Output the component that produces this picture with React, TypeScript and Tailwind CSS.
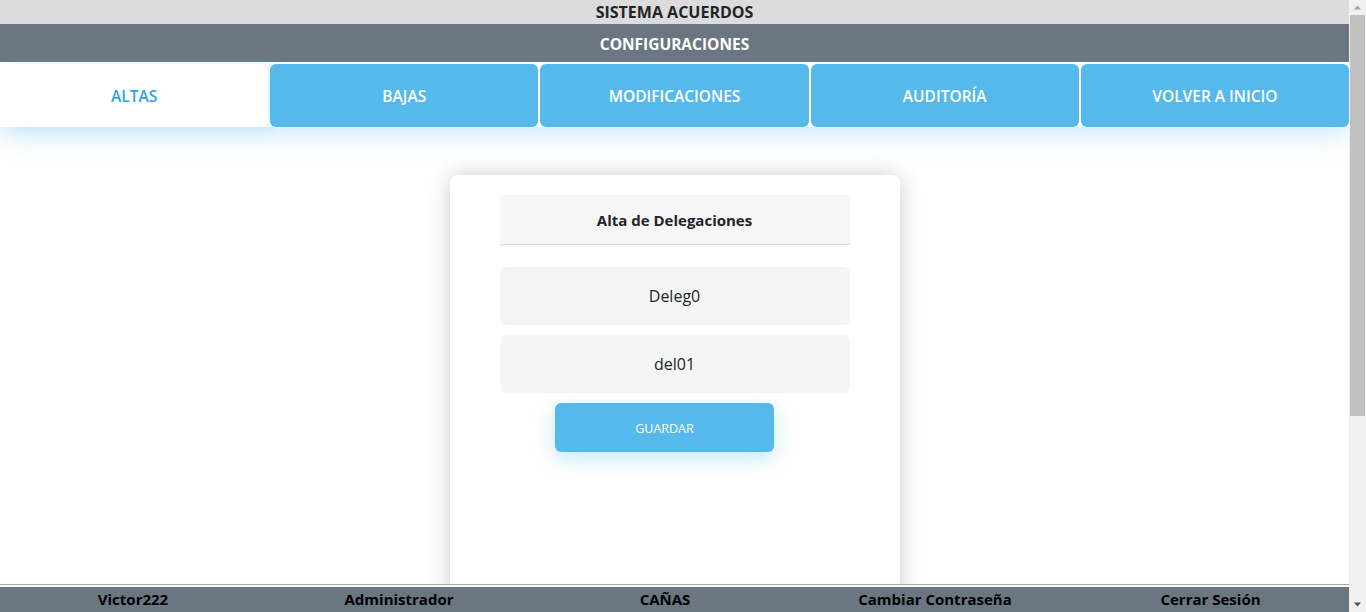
const tabs = ['ALTAS', 'BAJAS', 'MODIFICACIONES', 'AUDITORÍA', 'VOLVER A INICIO'];
const footer = ['Victor222', 'Administrador', 'CAÑAS', 'Cambiar Contraseña', 'Cerrar Sesión'];

function Scrollbar() {
  // page scrollbar, drawn because the headless browser hides its own
  return (
    <div className="fixed top-0 right-0 bottom-0 flex w-[17px] flex-col items-center bg-[#f1f1f1]">
      <svg width="17" height="15" viewBox="0 0 17 15" className="shrink-0">
        <path d="M5 9.5 L8.5 5.5 L12 9.5 Z" fill="#a3a3a3" />
      </svg>
      <div className="mx-auto h-[401px] w-[15px] bg-[#c1c1c1]" />
      <div className="flex-1" />
      <svg width="17" height="15" viewBox="0 0 17 15" className="shrink-0">
        <path d="M5 5.5 L8.5 9.5 L12 5.5 Z" fill="#505050" />
      </svg>
    </div>
  );
}

export default function App() {
  return (
    <div className="min-h-[882px] w-[calc(100%-17px)] bg-white text-[#212529] [font-family:'Open_Sans',sans-serif]">
      <header className="flex h-6 items-center justify-center bg-[#dcdcdc] text-base font-bold leading-none">
        SISTEMA ACUERDOS
      </header>
      <div className="flex h-[38px] items-center justify-center bg-[#6c7680] pt-[3px] text-[15.5px] font-bold text-white">
        CONFIGURACIONES
      </div>

      <nav className="flex gap-[2px] shadow-[0_10px_25px_rgba(86,185,235,0.25)]">
        {tabs.map((t, i) => (
          <button
            key={t}
            className={
              i === 0
                ? 'mt-[2px] h-[63px] flex-1 rounded-b-md bg-white pt-[3px] text-[15.5px] font-semibold text-[#2ba4ee] shadow-[8px_0_14px_rgba(86,185,235,0.2)]'
                : 'mt-[2px] h-[63px] flex-1 rounded-md bg-[#56b9eb] pt-[3px] text-[15.5px] font-semibold text-white'
            }
          >
            {t}
          </button>
        ))}
      </nav>

      <main className="flex justify-center pt-12 pb-5">
        <div className="flex h-[690px] w-[450px] flex-col items-center rounded-lg bg-white px-[50px] pt-5 shadow-[0_0_22px_rgba(0,0,0,0.2)]">
          <div className="flex h-[50px] w-full items-center justify-center rounded-t-sm border-b border-[#dcdcdc] bg-[#f6f6f6] pt-[2px] text-[15px] font-bold">
            Alta de Delegaciones
          </div>
          <input
            readOnly
            defaultValue="Deleg0"
            className="mt-[22px] h-[58px] w-full rounded-md bg-[#f5f5f5] text-center text-base outline-none"
          />
          <input
            readOnly
            defaultValue="del01"
            className="mt-[10px] h-[58px] w-full rounded-md bg-[#f5f5f5] text-center text-base outline-none"
          />
          <button className="mt-[10px] mr-5 h-[49px] w-[219px] rounded-md bg-[#56b9eb] pt-[3px] text-[12.5px] text-white shadow-[0_6px_20px_rgba(86,185,235,0.35)]">
            GUARDAR
          </button>
        </div>
      </main>

      <footer className="fixed bottom-0 left-0 right-[17px] h-7 border-t border-[#a9a9a9] bg-white pt-[2px]">
        <div className="grid h-full grid-cols-[266px_266px_266px_274px_1fr] items-center bg-[#6c7680] text-[15px] font-bold text-black">
          {footer.map((f) => (
            <span key={f} className="text-center">
              {f}
            </span>
          ))}
        </div>
      </footer>

      <Scrollbar />
    </div>
  );
}
